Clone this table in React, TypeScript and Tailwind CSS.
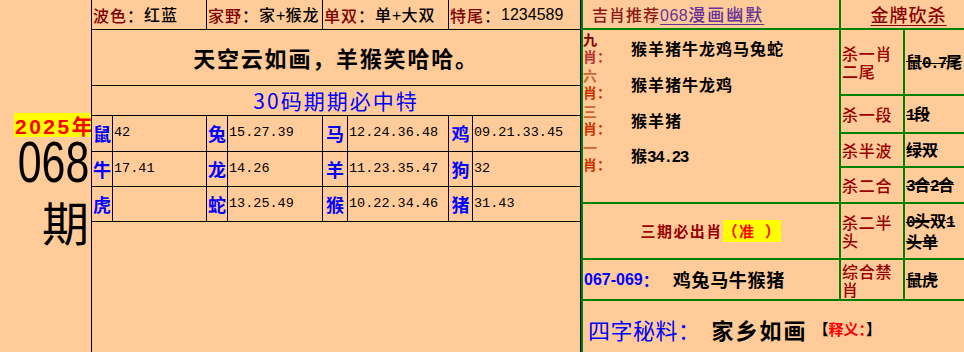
import React from "react";

const CJK = "font-['Noto_Sans_CJK_SC',sans-serif]";
const MONO = "font-['Liberation_Mono','Noto_Sans_CJK_SC',monospace]";

function TopCell({ w, label, value, last }: { w: string; label: string; value: React.ReactNode; last?: boolean }) {
  return (
    <div className={`${w} flex items-center whitespace-nowrap pl-[1px] font-medium ${last ? "" : "border-r border-black"}`}>
      <span className={`${CJK} tracking-[1px] text-[#800000]`}>{label}</span>
      <span className={`${CJK} tracking-[1px] text-black`}>：</span>
      <span className="text-black">{value}</span>
    </div>
  );
}

const rows: [string, string][][] = [
  [["鼠", "42"], ["兔", "15.27.39"], ["马", "12.24.36.48"], ["鸡", "09.21.33.45"]],
  [["牛", "17.41"], ["龙", "14.26"], ["羊", "11.23.35.47"], ["狗", "32"]],
  [["虎", ""], ["蛇", "13.25.49"], ["猴", "10.22.34.46"], ["猪", "31.43"]],
];
const rowH = ["h-[36px]", "h-[35px]", "h-[35px]"];
const zw = ["w-[21px]", "w-[21px]", "w-[25px]", "w-[24px]"];
const nw = ["w-[94px] border-r border-black", "w-[95px] border-r border-black", "w-[101px] border-r border-black", "flex-1"];

function Label({ a, b, ca, cb }: { a: string; b: string; ca: string; cb: string }) {
  return (
    <div className={`w-[26px] shrink-0 ${CJK} text-[14px] font-bold leading-[17px]`}>
      <div className={ca}>{a}</div>
      <div className={`whitespace-nowrap ${cb}`}>{b}</div>
    </div>
  );
}

function Mixed({ text }: { text: string }) {
  const parts = text.match(/[\x00-\x7f]+|[^\x00-\x7f]+/g) || [];
  return (
    <>
      {parts.map((p, i) =>
        /^[\x00-\x7f]+$/.test(p) ? (
          <span key={i} className={`${MONO} text-[16px] tracking-[-1.6px] line-through decoration-1`}>
            {p}
          </span>
        ) : (
          <span key={i} className={`${CJK} line-through decoration-1`}>
            {p}
          </span>
        )
      )}
    </>
  );
}

function KillRow({ h, label, value }: { h: string; label: string; value: string }) {
  return (
    <div className={`flex ${h} border-b-2 border-[#008000]`}>
      <div className={`flex w-[64px] shrink-0 items-center border-r-2 border-[#008000] pl-[1px] ${CJK} text-[16px] font-medium leading-[18px] tracking-[0.7px] text-[#990000]`}>
        <span>{label}</span>
      </div>
      <div className="flex flex-1 items-center pl-[1px] text-[16px] font-bold leading-[18px] text-black">
        <span>
          <Mixed text={value} />
        </span>
      </div>
    </div>
  );
}

export default function App() {
  return (
    <div className="flex h-[352px] w-[964px] overflow-hidden bg-[#FFCC99] font-['Liberation_Sans','Noto_Sans_CJK_SC',sans-serif] text-black">
      {/* left column */}
      <div className="flex w-[91px] shrink-0 flex-col items-end pt-[113px]">
        <div className="h-[24px] w-[77px] whitespace-nowrap bg-[#FFFF00] pl-[1px] text-[21px] font-bold leading-[24px] text-[#FF0000]">
          <span className="tracking-[2.5px]">2025</span>
          <span className={CJK}>年</span>
        </div>
        <div className="mt-[3px] h-[43px] origin-right scale-x-[0.74] pr-[2px] text-[58px] leading-[43px]">068</div>
        <div className={`mt-[14px] pr-[2px] ${CJK} text-[47px] leading-[47px]`}>期</div>
      </div>

      {/* middle */}
      <div className="flex w-[490px] shrink-0 flex-col border-x border-black">
        <div className="flex h-[30px] border-b border-black text-[16px]">
          <TopCell w="w-[115px]" label="波色" value={<span className={`${CJK} tracking-[1px]`}>红蓝</span>} />
          <TopCell
            w="w-[116px]"
            label="家野"
            value={
              <>
                <span className={`${CJK} tracking-[1px]`}>家</span>+<span className={`${CJK} tracking-[1px]`}>猴龙</span>
              </>
            }
          />
          <TopCell
            w="w-[126px]"
            label="单双"
            value={
              <>
                <span className={`${CJK} tracking-[1px]`}>单</span>+<span className={`${CJK} tracking-[1px]`}>大双</span>
              </>
            }
          />
          <TopCell w="flex-1" label="特尾" value="1234589" last />
        </div>
        <div className={`flex h-[56px] items-center justify-center border-b border-black ${CJK} text-[22px] font-bold tracking-[1.8px]`}>
          天空云如画，羊猴笑哈哈。
        </div>
        <div className={`flex h-[30px] items-center justify-center border-b border-black ${CJK} text-[21px] tracking-[2px] text-[#0000FF]`}>
          30码期期必中特
        </div>
        {rows.map((r, i) => (
          <div key={i} className={`flex ${rowH[i]} border-b border-black`}>
            {r.map(([z, n], j) => (
              <React.Fragment key={j}>
                <div className={`${zw[j]} flex shrink-0 items-center justify-center border-r border-black ${CJK} text-[18px] font-bold text-[#0000FF]`}>
                  {z}
                </div>
                <div className={`${nw[j]} flex shrink-0 items-center pl-[1px] ${MONO} text-[13.5px] text-black`}>{n}</div>
              </React.Fragment>
            ))}
          </div>
        ))}
      </div>

      {/* right panel */}
      <div className="flex flex-1 flex-col border-l-2 border-[#008000]">
        <div className="flex h-[301px]">
          {/* left sub */}
          <div className="flex w-[258px] shrink-0 flex-col border-r-2 border-[#008000]">
            <div className={`flex h-[30px] items-center border-b-2 border-[#008000] pl-[9px] ${CJK} text-[16px] font-medium whitespace-nowrap`}>
              <span className="tracking-[1px] text-[#8B1A1A]">吉肖推荐</span>
              <span className="text-[#663399] underline underline-offset-[3px]">
                <span className="font-['Liberation_Sans'] tracking-[0.5px]">068</span>
                <span className="text-[17px] tracking-[2px]">漫画幽默</span>
              </span>
            </div>
            <div className="flex h-[174px] flex-col border-b-2 border-[#008000]">
              <div className="flex h-[36px] items-center">
                <Label a="九" b="肖：" ca="text-[#800000]" cb="text-[#C03030]" />
                <span className={`ml-[22px] ${CJK} text-[16px] font-bold tracking-[1px]`}>猴羊猪牛龙鸡马兔蛇</span>
              </div>
              <div className="flex h-[36px] items-center">
                <Label a="六" b="肖：" ca="text-[#CC6633]" cb="text-[#CC3300]" />
                <span className={`ml-[22px] ${CJK} text-[16px] font-bold tracking-[1px]`}>猴羊猪牛龙鸡</span>
              </div>
              <div className="flex h-[36px] items-center">
                <Label a="三" b="肖：" ca="text-[#CC6633]" cb="text-[#CC3300]" />
                <span className={`ml-[22px] ${CJK} text-[16px] font-bold tracking-[1px]`}>猴羊猪</span>
              </div>
              <div className="flex h-[36px] items-center">
                <Label a="一" b="肖：" ca="text-[#CC6633]" cb="text-[#CC3300]" />
                <span className="ml-[22px] text-[16px] font-bold">
                  <span className={CJK}>猴</span>
                  <span className={`${MONO} text-[16px] tracking-[-1.4px]`}>34.23</span>
                </span>
              </div>
            </div>
            <div className={`flex h-[56px] items-center justify-center border-b-2 border-[#008000] ${CJK} text-[15px] font-bold`}>
              <span className="tracking-[1.4px] text-[#990000]">三期必出肖</span>
              <span className="whitespace-pre bg-[#FFFF00] tracking-[1.4px] text-[#FF0000]">（准  ）</span>
            </div>
            <div className="flex h-[41px] items-center whitespace-nowrap border-b-2 border-[#008000] pl-[1px]">
              <span className="text-[16px] font-bold text-[#0000FF]">067-069</span>
              <span className={`${CJK} text-[16px] font-bold text-[#0000FF]`}>：</span>
              <span className={`ml-[14px] ${CJK} text-[18px] font-bold tracking-[0.7px]`}>鸡兔马牛猴猪</span>
            </div>
          </div>
          {/* right sub */}
          <div className="flex flex-1 flex-col">
            <div className={`flex h-[30px] items-center justify-center border-b-2 border-[#008000] pl-[12px] ${CJK} text-[18px] font-medium tracking-[1px] text-[#8B0000]`}>
              <span className="underline underline-offset-[3px]">金牌砍杀</span>
            </div>
            <KillRow h="h-[66px]" label="杀一肖二尾" value="鼠0.7尾" />
            <KillRow h="h-[38px]" label="杀一段" value="1段" />
            <KillRow h="h-[34px]" label="杀半波" value="绿双" />
            <KillRow h="h-[36px]" label="杀二合" value="3合2合" />
            <KillRow h="h-[56px]" label="杀二半头" value="0头双1头单" />
            <KillRow h="h-[41px]" label="综合禁肖" value="鼠虎" />
          </div>
        </div>
        {/* bottom */}
        <div className="flex flex-1 items-center whitespace-nowrap pl-[5px] pt-[6px]">
          <span className={`${CJK} text-[22px] tracking-[0.5px] text-[#0000FF]`}>四字秘料：</span>
          <span className={`ml-[11px] ${CJK} text-[22px] font-semibold tracking-[2px]`}>家乡如画</span>
          <span className={`ml-[6px] ${CJK} text-[15px] font-bold`}>
            【<span className="text-[#FF0000]">释义：</span>】
          </span>
        </div>
      </div>
    </div>
  );
}
